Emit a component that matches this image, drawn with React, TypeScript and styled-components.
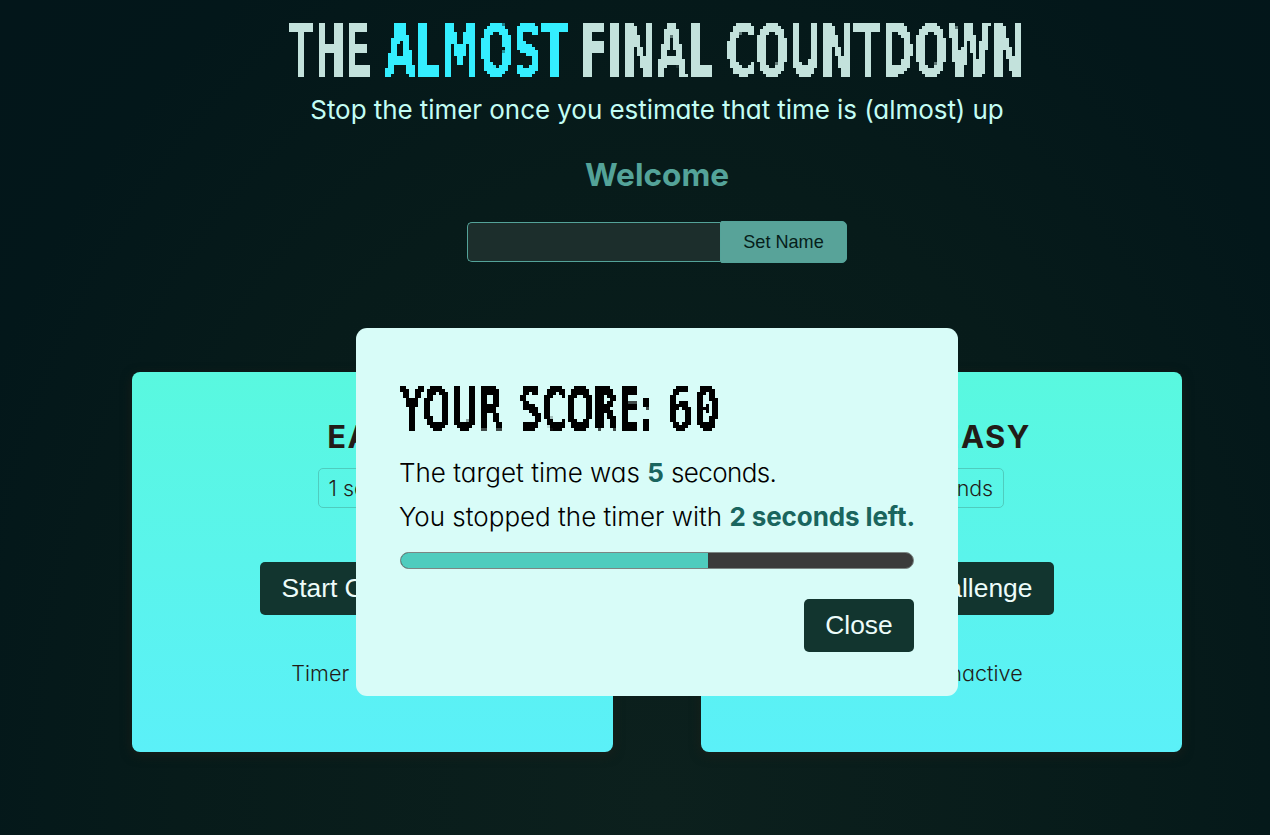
import React from 'react';
import styled, { createGlobalStyle } from 'styled-components';

const GlobalStyle = createGlobalStyle`
  * { box-sizing: border-box; }
  html { background: #03161a; }
  body {
    margin: 0;
    overflow: hidden;
    font-family: Inter, "Noto Sans", sans-serif;
    font-feature-settings: "cv11";
    color: #d8fcf8;
  }
  h1, h2, h3, p { margin: 0; }
`;

const Page = styled.div`
  display: flex;
  flex-direction: column;
  align-items: center;
  min-height: 835px;
  padding: 24px 0 0 44px;
  background: radial-gradient(ellipse 870px 1150px at 657px 800px, #0c201d 0%, #071b1a 55%, #03171a 85%, #03161a 100%);
`;

const Header = styled.header`
  display: flex;
  flex-direction: column;
  align-items: center;
`;

const PixelHeading = styled.h1<{ $size: number; $height: number; $tone: string; $gap: number }>`
  display: flex;
  gap: ${(p) => p.$gap}px;
  height: ${(p) => p.$height}px;
  line-height: ${(p) => p.$height}px;
  font-family: "DejaVu Sans Condensed", "DejaVu Sans", sans-serif;
  font-size: ${(p) => p.$size}px;
  font-weight: 700;
  font-stretch: condensed;
  color: ${(p) => p.$tone};
  white-space: nowrap;
  filter: url(#pixelate);
`;

const Word = styled.span<{ $width: number; $scale: number; $tone?: string; $mono?: boolean }>`
  display: block;
  width: ${(p) => p.$width}px;
  font-family: ${(p) => (p.$mono ? '"DejaVu Sans Mono", monospace' : 'inherit')};
  color: ${(p) => p.$tone ?? 'inherit'};
  transform: scaleX(${(p) => p.$scale});
  transform-origin: 0 50%;
`;

const Subtitle = styled.p`
  height: 40px;
  margin-top: 13px;
  font-size: 26px;
  line-height: 40px;
  letter-spacing: -0.06px;
  color: #c3fdf4;
`;

const Player = styled.section`
  display: flex;
  flex-direction: column;
  align-items: center;
  margin-top: 25px;
`;

const Welcome = styled.h2`
  height: 40px;
  font-size: 31.6px;
  line-height: 40px;
  font-weight: 700;
  color: #54a399;
`;

const NameForm = styled.form`
  display: flex;
  align-items: center;
  margin-top: 26px;
`;

const NameInput = styled.input`
  width: 253px;
  height: 40px;
  border: 1px solid #54a399;
  border-right: 0;
  border-radius: 5px 0 0 5px;
  background: #1c2e2c;
  outline: none;
`;

const NameButton = styled.button`
  width: 127px;
  height: 42px;
  padding: 0;
  border: 1px solid #54a399;
  border-radius: 2px 5px 5px 2px;
  background: #58a399;
  color: #061e1a;
  font: 18.1px "Liberation Sans", Arial, sans-serif;
`;

const Challenges = styled.main`
  display: flex;
  gap: 88px;
  margin-top: 109px;
`;

const Card = styled.section`
  display: flex;
  flex-direction: column;
  align-items: center;
  width: 481px;
  height: 380px;
  padding-top: 43px;
  border-radius: 8px;
  background: linear-gradient(#59f8df, #5bf0f8);
  box-shadow: 0 3px 11px rgba(35, 31, 24, 0.6);
  color: #221c18;
`;

const CardTitle = styled.h2`
  height: 44px;
  font-size: 31px;
  line-height: 44px;
  letter-spacing: 1.5px;
  word-spacing: 8px;
`;

const TimeTag = styled.p`
  height: 40px;
  margin-top: 9px;
  padding: 0 10px;
  border: 1px solid #4fccbe;
  border-radius: 5px;
  font-size: 21.4px;
  line-height: 38px;
  font-weight: 300;
`;

const ActionButton = styled.button`
  height: 53px;
  padding: 0 22px;
  border: 0;
  border-radius: 5px;
  background: #12352f;
  color: #edfcfa;
  font: 26.4px "Liberation Sans", Arial, sans-serif;
`;

const CloseButton = styled(ActionButton)`
  width: 110px;
  padding: 0;
`;

const CardAction = styled.div`
  margin-top: 54px;
`;

const Status = styled.p`
  height: 34px;
  margin-top: 41px;
  font-size: 21.6px;
  line-height: 34px;
  font-weight: 300;
  word-spacing: 20px;
`;

const Dialog = styled.div`
  position: absolute;
  top: 328px;
  left: 356px;
  width: 602px;
  height: 368px;
  padding: 44px;
  border-radius: 11px;
  background: #d8fcf8;
  color: #000;
`;

const ResultLines = styled.div`
  margin: 6px 0 0 -1px;
  font-size: 26px;
  line-height: 44px;
  font-weight: 300;
  white-space: nowrap;
`;

const Unit = styled.span`
  letter-spacing: -0.6px;
`;

const Strong = styled.strong`
  font-weight: 700;
  letter-spacing: -0.1px;
  color: #1a655e;
`;

const Track = styled.div`
  height: 17px;
  margin-top: 13px;
  overflow: hidden;
  border: 1px solid #7b8684;
  border-radius: 9px;
  background: #3b3b3b;
`;

const Fill = styled.div`
  width: 60%;
  height: 100%;
  background: #4fccbe;
`;

const DialogActions = styled.div`
  display: flex;
  justify-content: flex-end;
  margin-top: 30px;
`;

const FilterDefs = styled.svg`
  position: absolute;
  width: 0;
  height: 0;
`;

// Samples one point per 3px cell and grows it to fill the cell, for bitmap-style lettering.
function PixelFilter() {
  return (
    <FilterDefs aria-hidden="true">
      <filter id="pixelate" filterUnits="userSpaceOnUse" primitiveUnits="userSpaceOnUse" x="0" y="-13" width="756" height="96" colorInterpolationFilters="sRGB">
        <feFlood x="1" y="-12" width="1" height="1" floodColor="#000" result="point" />
        <feOffset in="point" x="0" y="-13" width="3" height="3" dx="0" dy="0" />
        <feTile x="0" y="-13" width="756" height="96" result="grid" />
        <feComponentTransfer in="SourceGraphic" result="crisp">
          <feFuncA type="linear" slope="30" intercept="-14" />
        </feComponentTransfer>
        <feComposite in="crisp" in2="grid" operator="in" />
        <feMorphology operator="dilate" radius="1" />
      </filter>
    </FilterDefs>
  );
}

function ChallengeCard({ title, target }: { title: string; target: string }) {
  return (
    <Card>
      <CardTitle>{title}</CardTitle>
      <TimeTag>{target}</TimeTag>
      <CardAction><ActionButton>Start Challenge</ActionButton></CardAction>
      <Status>Timer inactive</Status>
    </Card>
  );
}

export default function App() {
  return (
    <>
      <GlobalStyle />
      <PixelFilter />
      <Page>
        <Header>
          <PixelHeading $size={73} $height={53} $tone="#c3e2dc" $gap={15}>
            <Word $width={81} $scale={0.57}>THE </Word>
            <Word $width={180} $scale={0.6} $tone="#34eeff">ALMOST </Word>
            <Word $width={131} $scale={0.612}>FINAL </Word>
            <Word $width={299} $scale={0.603}>COUNTDOWN</Word>
          </PixelHeading>
          <Subtitle>Stop the timer once you estimate that time is (almost) up</Subtitle>
        </Header>
        <Player>
          <Welcome>Welcome</Welcome>
          <NameForm>
            <NameInput type="text" />
            <NameButton type="button">Set Name</NameButton>
          </NameForm>
        </Player>
        <Challenges>
          <ChallengeCard title="EASY" target="1 second" />
          <ChallengeCard title="NOT EASY" target="5 seconds" />
        </Challenges>
      </Page>
      <Dialog role="dialog">
        <PixelHeading as="h2" $size={61} $height={73} $tone="#000" $gap={14}>
          <Word $width={105} $scale={0.605}>YOUR </Word>
          <Word $width={134} $scale={0.59}>SCORE: </Word>
          <Word $width={51} $scale={0.72} $mono>60</Word>
        </PixelHeading>
        <ResultLines>
          <p>The target time was <Strong>5</Strong> <Unit>seconds.</Unit></p>
          <p>You stopped the timer with <Strong>2 seconds left.</Strong></p>
        </ResultLines>
        <Track><Fill /></Track>
        <DialogActions><CloseButton>Close</CloseButton></DialogActions>
      </Dialog>
    </>
  );
}
